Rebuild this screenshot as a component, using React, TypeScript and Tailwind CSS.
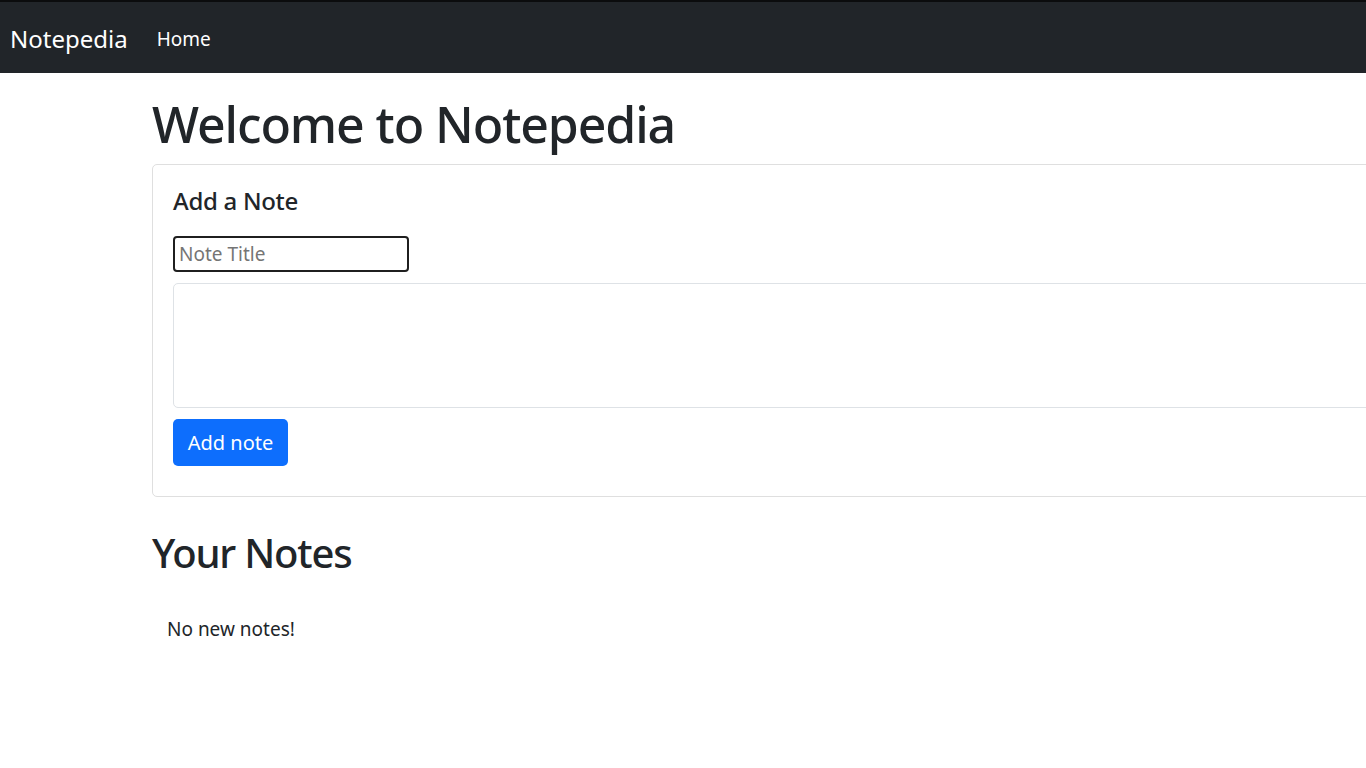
import React, { useState } from "react";

const font = { fontFamily: '"Noto Sans", "Open Sans", sans-serif' };

const Navbar: React.FC = () => {
   return (
      <nav className="border-t-2 border-[#0b0c0d] bg-[#212529] h-[73px] flex items-center px-[10px] pt-[3px]">
         <a href="#" className="text-white text-[24px] mr-[29px] leading-none">
            Notepedia
         </a>
         <a href="#" className="text-white text-[19px] leading-none">
            Home
         </a>
      </nav>
   );
};

const App: React.FC = () => {
   const [title, setTitle] = useState("");
   const [body, setBody] = useState("");

   return (
      <div className="w-screen min-h-screen overflow-x-hidden bg-white text-[#212529]" style={font}>
         <Navbar />
         <div className="pl-[152px] pt-[21px]">
            <h1 className="text-[50px] leading-[60px] font-medium mb-[10px] tracking-[-1.1px]">
               Welcome to Notepedia
            </h1>
            <div className="w-[1260px] border border-[#dfdfdf] rounded-[5px] p-[20px] pb-[30px]">
               <h5 className="text-[24px] leading-[30px] font-medium mt-[1px] mb-[20px] tracking-[-0.3px]">
                  Add a Note
               </h5>
               <input
                  type="text"
                  value={title}
                  onChange={(e) => setTitle(e.target.value)}
                  placeholder="Note Title"
                  className="block w-[236px] h-[36px] border-2 border-[#1f1f1f] rounded-[4px] px-[4px] text-[19px] placeholder:text-[#757575] outline-none"
               />
               <textarea
                  value={body}
                  onChange={(e) => setBody(e.target.value)}
                  className="block mt-[11px] w-full h-[125px] border border-[#dee2e6] rounded-[5px] resize-none outline-none"
               />
               <button className="mt-[11px] w-[115px] h-[47px] bg-[#0d6efd] text-white text-[20px] rounded-[5px]">
                  Add note
               </button>
            </div>
            <h2 className="mt-[32px] text-[40px] leading-[48px] font-medium tracking-[-1.2px]">
               Your Notes
            </h2>
            <div className="mt-[39px] pl-[15px] text-[19px] leading-[26px]">
               No new notes!
            </div>
         </div>
      </div>
   );
};

export default App;
